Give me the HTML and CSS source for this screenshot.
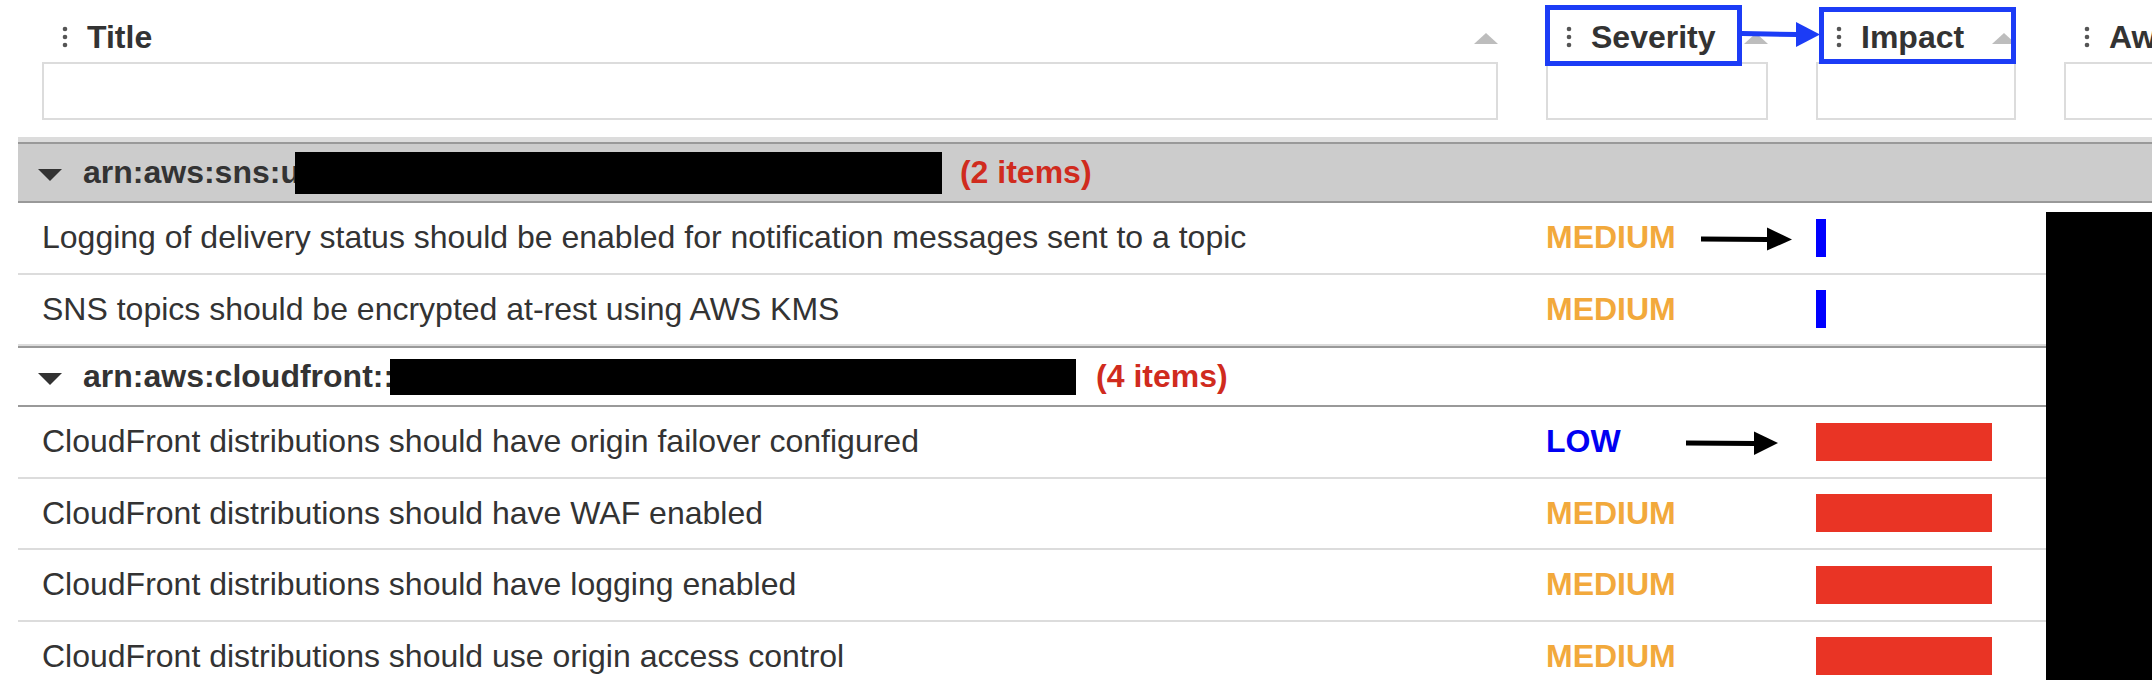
FILE: index.html
```html
<!DOCTYPE html>
<html lang="en">
<head>
<meta charset="utf-8">
<title>Findings</title>
<link rel="stylesheet" href="styles.css">
</head>
<body>
<div class="page">
  <div class="table">
    <div class="thead">
      <div class="hcell">
        <div class="hlabel">
          <svg class="grip" viewBox="0 0 45 36"><circle cx="23" cy="10" r="2.3"/><circle cx="23" cy="18" r="2.3"/><circle cx="23" cy="26" r="2.3"/></svg>
          <span class="htext">Title</span>
          <svg class="sort" viewBox="0 0 24 11"><polygon points="12,0 24,11 0,11"/></svg>
        </div>
        <div class="filter"></div>
      </div>
      <div class="hcell">
        <div class="hlabel">
          <svg class="grip" viewBox="0 0 45 36"><circle cx="23" cy="10" r="2.3"/><circle cx="23" cy="18" r="2.3"/><circle cx="23" cy="26" r="2.3"/></svg>
          <span class="htext">Severity</span>
          <svg class="sort" viewBox="0 0 24 11"><polygon points="12,0 24,11 0,11"/></svg>
        </div>
        <div class="filter"></div>
        <div class="mark mark-severity"></div>
        <svg class="mark-link" viewBox="0 0 78 27"><polygon points="0,10 55,11 55,16 0,15"/><polygon points="54,1 78,13.5 54,26"/></svg>
      </div>
      <div class="hcell">
        <div class="hlabel">
          <svg class="grip" viewBox="0 0 45 36"><circle cx="23" cy="10" r="2.3"/><circle cx="23" cy="18" r="2.3"/><circle cx="23" cy="26" r="2.3"/></svg>
          <span class="htext">Impact</span>
          <svg class="sort" viewBox="0 0 24 11"><polygon points="12,0 24,11 0,11"/></svg>
        </div>
        <div class="filter"></div>
        <div class="mark mark-impact"></div>
      </div>
      <div class="hcell">
        <div class="hlabel">
          <svg class="grip" viewBox="0 0 45 36"><circle cx="23" cy="10" r="2.3"/><circle cx="23" cy="18" r="2.3"/><circle cx="23" cy="26" r="2.3"/></svg>
          <span class="htext">Aws Account</span>
          <svg class="sort" viewBox="0 0 24 11"><polygon points="12,0 24,11 0,11"/></svg>
        </div>
        <div class="filter"></div>
      </div>
    </div>

    <div class="group group-shaded">
      <svg class="caret" viewBox="0 0 24 12"><polygon points="0,0 24,0 12,12"/></svg>
      <span class="gname">arn:aws:sns:u</span><span class="redact redact-sns"></span><span class="count">(2 items)</span>
    </div>
    <div class="row">
      <div class="cell">Logging of delivery status should be enabled for notification messages sent to a topic</div>
      <div class="cell sev medium">MEDIUM<svg class="note-arrow note-a" viewBox="0 0 92 24"><polygon points="0,9.5 67,10 67,15 0,14.5"/><polygon points="66,0.5 91,12.5 66,23.5"/></svg></div>
      <div class="cell"><span class="bar bar-blue" style="width:5%"></span></div>
      <div class="cell"></div>
    </div>
    <div class="row">
      <div class="cell">SNS topics should be encrypted at-rest using AWS KMS</div>
      <div class="cell sev medium">MEDIUM</div>
      <div class="cell"><span class="bar bar-blue" style="width:5%"></span></div>
      <div class="cell"></div>
    </div>

    <div class="group">
      <svg class="caret" viewBox="0 0 24 12"><polygon points="0,0 24,0 12,12"/></svg>
      <span class="gname">arn:aws:cloudfront::</span><span class="redact redact-cf"></span><span class="count count-cf">(4 items)</span>
    </div>
    <div class="row">
      <div class="cell">CloudFront distributions should have origin failover configured</div>
      <div class="cell sev low">LOW<svg class="note-arrow note-b" viewBox="0 0 92 24"><polygon points="0,9.5 69,10 69,15 0,14.5"/><polygon points="68,0.5 92,12 68,24"/></svg></div>
      <div class="cell"><span class="bar bar-red" style="width:88%"></span></div>
      <div class="cell"></div>
    </div>
    <div class="row">
      <div class="cell">CloudFront distributions should have WAF enabled</div>
      <div class="cell sev medium">MEDIUM</div>
      <div class="cell"><span class="bar bar-red" style="width:88%"></span></div>
      <div class="cell"></div>
    </div>
    <div class="row">
      <div class="cell">CloudFront distributions should have logging enabled</div>
      <div class="cell sev medium">MEDIUM</div>
      <div class="cell"><span class="bar bar-red" style="width:88%"></span></div>
      <div class="cell"></div>
    </div>
    <div class="row">
      <div class="cell">CloudFront distributions should use origin access control</div>
      <div class="cell sev medium">MEDIUM</div>
      <div class="cell"><span class="bar bar-red" style="width:88%"></span></div>
      <div class="cell"></div>
    </div>
  </div>
  <div class="side-redact"></div>
</div>
</body>
</html>
```

FILE: styles.css
```css
* { box-sizing: border-box; }

html, body {
  margin: 0;
  padding: 0;
  background: #fff;
}

body {
  font-family: "Liberation Sans", Arial, Helvetica, sans-serif;
  color: #333;
}

.page {
  position: relative;
  width: 2152px;
  height: 680px;
  overflow: hidden;
  padding-left: 18px;
}

.table {
  width: 2442px;
}

.thead,
.row {
  display: grid;
  grid-template-columns: 1504px 270px 248px 420px;
}

/* ---------- header ---------- */
.thead {
  border-bottom: 5px solid #dcdcdc;
}

.hcell {
  position: relative;
  padding: 19px 24px 17px;
}

.hlabel {
  display: flex;
  align-items: center;
  height: 36px;
  font-size: 32px;
  line-height: 36px;
  font-weight: 700;
  white-space: nowrap;
}

.grip {
  flex: none;
  width: 45px;
  height: 36px;
  fill: #555;
}

.sort {
  flex: none;
  width: 24px;
  height: 11px;
  margin-left: auto;
  margin-top: 3px;
  fill: #bdbdbd;
}

.filter {
  margin-top: 7px;
  height: 58px;
  border: 2px solid #dcdcdc;
  background: #fff;
}

/* annotation marks */
.mark {
  position: absolute;
  border: 5px solid #1c3cf6;
}

.mark-severity {
  left: 23px;
  top: 5px;
  width: 197px;
  height: 61px;
}

.mark-impact {
  left: 27px;
  top: 7px;
  width: 197px;
  height: 57px;
}

.mark-link {
  position: absolute;
  left: 220px;
  top: 21px;
  width: 78px;
  height: 27px;
  fill: #1c3cf6;
}

/* ---------- group rows ---------- */
.group {
  display: flex;
  align-items: center;
  height: 61px;
  padding-left: 20px;
  border-top: 2px solid #999;
  border-bottom: 2px solid #999;
  font-size: 32px;
  font-weight: 700;
  white-space: nowrap;
  background: #fff;
}

.group-shaded {
  background: #cccccc;
}

.caret {
  flex: none;
  width: 24px;
  height: 12px;
  margin-right: 21px;
  margin-top: 4px;
  fill: #333;
}

.redact {
  display: inline-block;
  flex: none;
  background: #000;
}

.redact-sns {
  width: 647px;
  height: 42px;
  margin-left: -5px;
}

.redact-cf {
  width: 686px;
  height: 36px;
  margin-left: -4px;
}

.count {
  color: #d02b1e;
  margin-left: 18px;
}

.count-cf {
  margin-left: 20px;
}

/* ---------- data rows ---------- */
.row {
  border-bottom: 2px solid #dcdcdc;
}

.cell {
  position: relative;
  display: flex;
  align-items: center;
  height: 69.5px;
  padding: 0 24px;
  font-size: 32px;
  white-space: nowrap;
}

.sev {
  font-weight: 700;
}

.medium {
  color: #f2a93c;
}

.low {
  color: #0000f2;
}

.bar {
  display: block;
  height: 38px;
}

.bar-blue {
  background: #0000ff;
}

.bar-red {
  background: #e93425;
}

.note-arrow {
  position: absolute;
  top: 50%;
  width: 92px;
  height: 24px;
  margin-top: -11px;
  fill: #000;
}

.note-a {
  left: 179px;
}

.note-b {
  left: 164px;
}

.side-redact {
  position: absolute;
  left: 2046px;
  top: 212px;
  width: 106px;
  height: 468px;
  background: #000;
}
```
